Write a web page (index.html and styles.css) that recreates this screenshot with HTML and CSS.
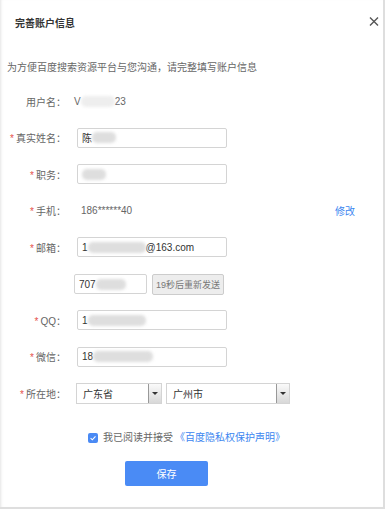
FILE: index.html
```html
<!DOCTYPE html>
<html lang="zh-CN">
<head>
  <meta charset="UTF-8">
  <meta name="viewport" content="width=device-width, initial-scale=1.0">
  <title>完善账户信息</title>
  <link rel="stylesheet" href="styles.css">
</head>
<body>
  <div class="dialog">
    <header class="head">
      <h1>完善账户信息</h1>
      <svg class="close" width="10" height="9" viewBox="0 0 10 9">
        <path d="M1 0.5 L9 8.5 M9 0.5 L1 8.5" stroke="#555" stroke-width="1.4" fill="none"/>
      </svg>
    </header>

    <p class="desc">为方便百度搜索资源平台与您沟通，请完整填写账户信息</p>

    <div class="form">
      <div class="row">
        <label>用户名：</label>
        <div class="ctrl"><span class="value plain">V<span class="blob light" style="width:34px"></span>23</span></div>
      </div>
      <div class="row">
        <label><i>*</i>真实姓名：</label>
        <div class="ctrl"><div class="input">陈<span class="blob" style="width:24px"></span></div></div>
      </div>
      <div class="row">
        <label><i>*</i>职务：</label>
        <div class="ctrl"><div class="input"><span class="blob" style="width:24px"></span></div></div>
      </div>
      <div class="row">
        <label><i>*</i>手机：</label>
        <div class="ctrl spread"><span class="value">186******40</span><a class="link">修改</a></div>
      </div>
      <div class="row">
        <label><i>*</i>邮箱：</label>
        <div class="ctrl"><div class="input">1<span class="blob" style="width:58px"></span>@163.com</div></div>
      </div>
      <div class="row">
        <label></label>
        <div class="ctrl code">
          <div class="input short">707<span class="blob" style="width:30px"></span></div>
          <button class="resend">19秒后重新发送</button>
        </div>
      </div>
      <div class="row">
        <label><i>*</i>QQ：</label>
        <div class="ctrl"><div class="input">1<span class="blob" style="width:58px"></span></div></div>
      </div>
      <div class="row">
        <label><i>*</i>微信：</label>
        <div class="ctrl"><div class="input">18<span class="blob" style="width:60px"></span></div></div>
      </div>
      <div class="row">
        <label><i>*</i>所在地：</label>
        <div class="ctrl selects">
          <div class="select province"><span>广东省</span><b class="arrow"></b></div>
          <div class="select city"><span>广州市</span><b class="arrow"></b></div>
        </div>
      </div>
    </div>

    <div class="agree">
      <span class="check">
        <svg width="10" height="10" viewBox="0 0 10 10"><path d="M2.6 5.2 L4.3 6.8 L7.5 3.4" stroke="#fff" stroke-width="1.1" fill="none"/></svg>
      </span>
      <span>我已阅读并接受</span><a class="link">《百度隐私权保护声明》</a>
    </div>

    <button class="save">保存</button>
  </div>
</body>
</html>
```

FILE: styles.css
```css
* {
  margin: 0;
  padding: 0;
  box-sizing: border-box;
}

body {
  font-family: "Liberation Sans", "Noto Sans CJK SC", sans-serif;
  font-size: 10px;
  color: #666;
  background: #fff;
}

.dialog {
  width: 385px;
  height: 509px;
  background: #fff;
  border-right: 2px solid #dedede;
  border-bottom: 2px solid #dedede;
  box-shadow: inset 3px 0 3px -2px #e4e4e4;
}

.head {
  height: 44px;
  display: flex;
  align-items: center;
  justify-content: space-between;
  padding: 0 4px 0 15px;
}

.head h1 {
  font-size: 10px;
  font-weight: bold;
  color: #333;
}

.close {
  margin-top: -1px;
}

.desc {
  margin-top: 18px;
  padding-left: 7px;
  line-height: 12px;
  color: #666;
}

.form {
  margin-top: 17px;
  display: flex;
  flex-direction: column;
  gap: 16.5px;
}

.row {
  display: grid;
  grid-template-columns: 66px 1fr;
  column-gap: 11px;
  height: 20px;
  align-items: center;
  padding-right: 28px;
}

.row label {
  text-align: right;
  color: #666;
  white-space: nowrap;
}

.row label i {
  font-style: normal;
  color: #e5524b;
  margin-right: 2px;
}

.ctrl {
  display: flex;
  align-items: center;
}

.spread {
  justify-content: space-between;
}

.value {
  padding-left: 4px;
  color: #666;
}

.value.plain {
  padding-left: 0;
  margin-left: -3px;
  display: flex;
  align-items: center;
}

.link {
  color: #3b86f0;
  cursor: pointer;
}

.input {
  width: 150px;
  height: 20px;
  border: 1px solid #d4d4d4;
  border-radius: 2px;
  padding: 0 4px;
  display: flex;
  align-items: center;
  color: #333;
  white-space: nowrap;
}

.input.short {
  width: 73px;
}

.blob {
  display: inline-block;
  height: 11px;
  border-radius: 5px;
  background: #dedede;
  filter: blur(1.5px);
}

.blob.light {
  background: #eeeeee;
}

.code {
  margin-left: -3px;
  gap: 5px;
}

.resend {
  width: 72px;
  height: 21px;
  border: 1px solid #ccc;
  border-radius: 2px;
  background: #ededed;
  color: #777;
  font-family: inherit;
  font-size: 9px;
}

.selects {
  gap: 4px;
  margin-left: -1px;
}

.select {
  height: 21px;
  border: 1px solid #d4d4d4;
  display: flex;
  align-items: center;
  justify-content: space-between;
  color: #333;
}

.select span {
  padding-left: 6px;
}

.province {
  width: 86px;
}

.city {
  width: 124px;
}

.arrow {
  width: 13px;
  height: 100%;
  border-left: 1px solid #999;
  background: linear-gradient(#fafafa, #d8d8d8);
  display: flex;
  align-items: center;
  justify-content: center;
}

.arrow::after {
  content: "";
  border-left: 3px solid transparent;
  border-right: 3px solid transparent;
  border-top: 3px solid #333;
}

.agree {
  margin-top: 29px;
  padding-left: 88px;
  display: flex;
  align-items: center;
  line-height: 12px;
  gap: 5px;
}

.agree .link {
  margin-left: -3px;
}

.check {
  width: 10px;
  height: 10px;
  border-radius: 2px;
  background: #4a8af4;
  display: flex;
}

.save {
  display: block;
  margin: 17px 0 0 125px;
  width: 83px;
  height: 25px;
  border: none;
  border-radius: 2px;
  background: #4a8bf5;
  color: #fff;
  font-family: inherit;
  font-size: 10px;
}
```
